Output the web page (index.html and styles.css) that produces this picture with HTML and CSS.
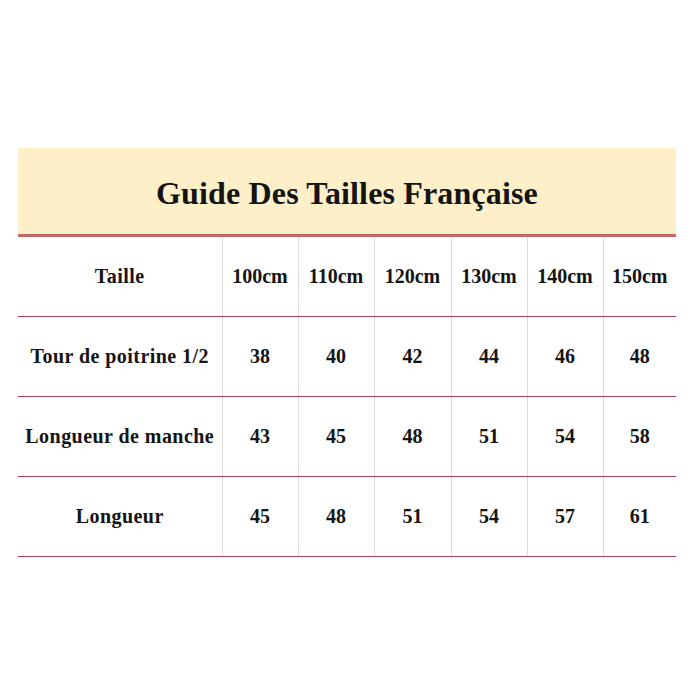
FILE: index.html
```html
<!DOCTYPE html>
<html lang="fr">
<head>
<meta charset="utf-8">
<title>Guide Des Tailles Française</title>
<link rel="stylesheet" href="styles.css">
</head>
<body>
<div class="guide">
  <div class="band"><h1 class="title">Guide Des Tailles Française</h1></div>
  <table class="sizes">
    <colgroup>
      <col class="c-label"><col class="c-n"><col class="c-n"><col class="c-n3"><col class="c-n"><col class="c-n"><col class="c-last">
    </colgroup>
    <tr><td>Taille</td><td>100cm</td><td>110cm</td><td>120cm</td><td>130cm</td><td>140cm</td><td>150cm</td></tr>
    <tr><td>Tour de poitrine 1/2</td><td>38</td><td>40</td><td>42</td><td>44</td><td>46</td><td>48</td></tr>
    <tr><td>Longueur de manche</td><td>43</td><td>45</td><td>48</td><td>51</td><td>54</td><td>58</td></tr>
    <tr><td>Longueur</td><td>45</td><td>48</td><td>51</td><td>54</td><td>57</td><td>61</td></tr>
  </table>
</div>
</body>
</html>
```
FILE: styles.css
```css
html, body {
  margin: 0;
  padding: 0;
  background: #ffffff;
}
body {
  font-family: "Liberation Serif", "DejaVu Serif", serif;
  color: #141414;
}
.guide {
  width: 658px;
  margin: 148px 0 0 18px;
}
.band {
  height: 86px;
  background: #fdf0c8;
  border-bottom: 3px solid #c56862;
  display: flex;
  align-items: center;
  justify-content: center;
}
.title {
  margin: 0;
  font-size: 32px;
  font-weight: bold;
  line-height: 1;
  padding-top: 4px;
  letter-spacing: 0.15px;
}
.sizes {
  width: 658px;
  border-collapse: collapse;
  table-layout: fixed;
}
.c-label { width: 204px; }
.c-n { width: 76px; }
.c-n3 { width: 77px; }
.c-last { width: 73px; }
.sizes td {
  height: 79px;
  padding: 0;
  text-align: center;
  vertical-align: middle;
  font-size: 20px;
  font-weight: bold;
  white-space: nowrap;
  border-bottom: 1px solid #a8434f;
  border-left: 1px solid #dcdcdc;
}
.sizes td:first-child {
  border-left: none;
  letter-spacing: 0.45px;
}
```
